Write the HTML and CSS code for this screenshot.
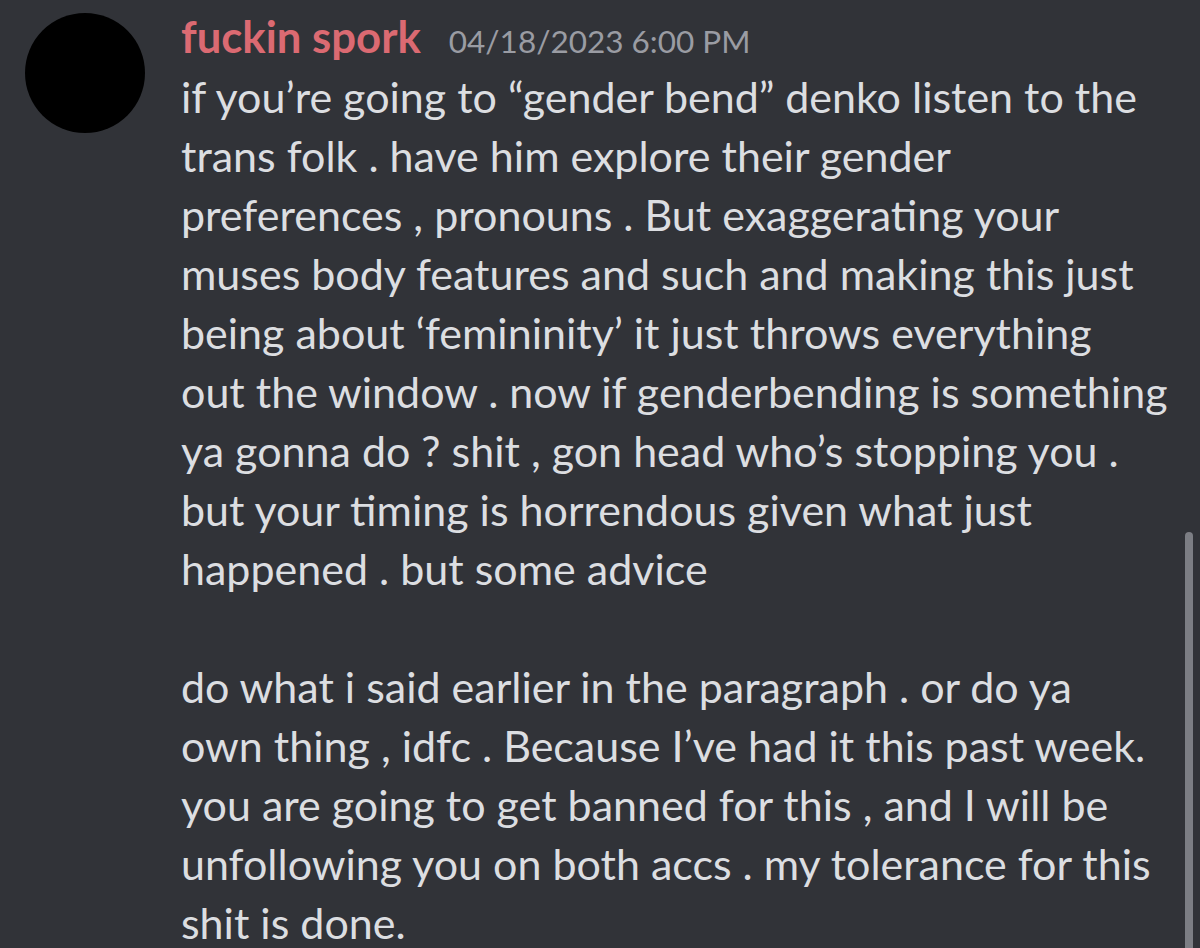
FILE: index.html
```html
<!DOCTYPE html>
<html>
<head>
<meta charset="utf-8">
<link rel="stylesheet" href="styles.css">
</head>
<body>
<div class="message">
  <div class="avatar"></div>
  <div class="content">
    <div class="header">
      <span class="username">fuckin spork</span>
      <span class="timestamp">04/18/2023 6:00 PM</span>
    </div>
    <div class="text">
      <div class="line">if you’re going to “gender bend” denko listen to the</div>
      <div class="line">trans folk . have him explore their gender</div>
      <div class="line">preferences , pronouns . But exaggerating your</div>
      <div class="line">muses body features and such and making this just</div>
      <div class="line">being about ‘femininity’ it just throws everything</div>
      <div class="line">out the window . now if genderbending is something</div>
      <div class="line">ya gonna do ? shit , gon head who’s stopping you .</div>
      <div class="line">but your timing is horrendous given what just</div>
      <div class="line">happened . but some advice</div>
      <div class="line blank">&nbsp;</div>
      <div class="line">do what i said earlier in the paragraph . or do ya</div>
      <div class="line">own thing , idfc . Because I’ve had it this past week.</div>
      <div class="line">you are going to get banned for this , and I will be</div>
      <div class="line">unfollowing you on both accs . my tolerance for this</div>
      <div class="line">shit is done.</div>
    </div>
  </div>
</div>
<div class="scrollbar"></div>
</body>
</html>
```

FILE: styles.css
```css
html, body {
  margin: 0;
  padding: 0;
  background: #313338;
  width: 1200px;
  height: 948px;
  overflow: hidden;
}
body {
  font-family: Lato, "Noto Sans", sans-serif;
  position: relative;
}
.message {
  display: flex;
  padding: 13px 0 0 25px;
  gap: 36px;
}
.avatar {
  width: 120px;
  height: 120px;
  border-radius: 50%;
  background: #000;
  flex-shrink: 0;
}
.content {
  display: flex;
  flex-direction: column;
}
.header {
  display: flex;
  align-items: baseline;
  gap: 28px;
  height: 54px;
  line-height: 46px;
}
.username {
  color: #db6a72;
  font-weight: 700;
  font-size: 43.7px;
}
.timestamp {
  color: #9a9ca3;
  font-size: 31.5px;
}
.text {
  color: #dcdee1;
  font-size: 43px;
  line-height: 59px;
  white-space: nowrap;
}
.scrollbar {
  position: absolute;
  right: 7px;
  top: 532px;
  width: 8px;
  height: 430px;
  border-radius: 4px;
  background: #7c7e84;
}
```
